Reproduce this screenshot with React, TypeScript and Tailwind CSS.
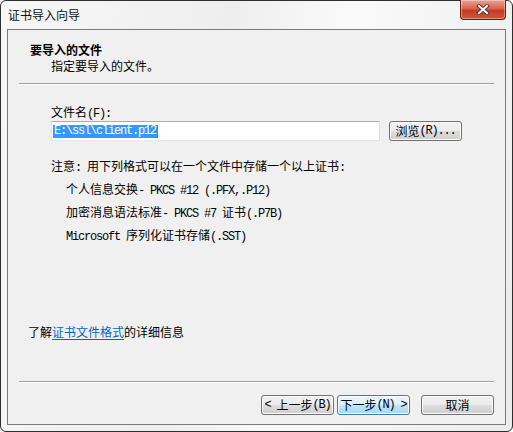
import type { ReactNode } from 'react'

// ASCII runs in the dialog are half-width (6px) like SimSun
function A({ children }: { children: ReactNode }) {
    return <span className="font-['Liberation_Mono'] text-[12px] leading-none tracking-[-1.2px] whitespace-pre">{children}</span>
}

function WinButton({ children, focused = false }: { children: ReactNode; focused?: boolean }) {
    return (
        <div
            className={`w-[73px] h-[20px] rounded-[3px] border flex items-center justify-center leading-[18px] ${
                focused
                    ? 'border-[#3c7fb1] bg-[linear-gradient(#eaf6fd,#d9f0fc_50%,#bee6fd_51%,#a7d9f5)] shadow-[inset_0_0_0_1px_#fbfdfe]'
                    : 'border-[#707070] bg-[linear-gradient(#f2f2f2,#ebebeb_50%,#dddddd_51%,#cfcfcf)] shadow-[inset_0_0_0_1px_#fcfcfc]'
            }`}
        >
            {children}
        </div>
    )
}

function CloseButton() {
    return (
        <div className="w-[46px] h-[20px] -mt-[1px] rounded-b-[4px] border border-t-0 border-[#6d1f14] bg-[linear-gradient(#e9a596,#d9644d_45%,#c73a22_55%,#d0573f)] shadow-[inset_0_0_0_1px_rgba(255,255,255,0.35)] flex items-center justify-center">
            <svg width="14" height="11" viewBox="0 0 14 11">
                <path d="M3 2 L11 9 M11 2 L3 9" stroke="#5a3a34" strokeWidth="4" strokeLinecap="square" />
                <path d="M3 2 L11 9 M11 2 L3 9" stroke="#ffffff" strokeWidth="2" strokeLinecap="square" />
            </svg>
        </div>
    )
}

export default function App() {
    return (
        <div className="w-[513px] h-[432px] bg-white font-['Noto_Sans_CJK_SC',sans-serif] text-[12px] text-black">
            <div className="w-full h-full border border-[#2e2e2e] rounded-[6px] bg-[linear-gradient(100deg,#f7f7f7,#eeeeee_40%,#fafafa_60%,#ececec)] flex flex-col px-[6px] pb-[6px]">
                {/* Barra de título */}
                <div className="h-[28px] flex items-start justify-between">
                    <span className="ml-[1px] mt-[6px] leading-[16px] text-[#111]">证书导入向导</span>
                    <CloseButton />
                </div>

                {/* Área cliente */}
                <div className="flex-1 border border-[#7a7a7a] bg-[#f0f0f0] flex flex-col">
                    <div className="pt-[12px] leading-[16px]">
                        <p className="ml-[22px] font-bold">要导入的文件</p>
                        <p className="ml-[43px]">指定要导入的文件。</p>
                    </div>
                    <div className="mx-[11px] mt-[9px] border-t border-[#a0a0a0] border-b border-b-white" />

                    <div className="ml-[43px] mt-[19px] leading-[16px]">
                        文件名<A>(F):</A>
                    </div>
                    <div className="ml-[43px] mt-[1px] flex items-center gap-[9px]">
                        <div className="w-[329px] h-[20px] border border-[#abadb3] border-l-[#e2e3ea] border-r-[#dbdfe6] border-b-[#e3e9ef] bg-white flex items-center px-[1px]">
                            <span className="bg-[#3399ff] text-white leading-[13px] px-[1px] font-['Liberation_Mono'] text-[12px] tracking-[-1.2px]">
                                E:\ssl\client.p12
                            </span>
                            <span className="w-[1px] h-[13px] bg-[#cc6600]" />
                        </div>
                        <WinButton>
                            浏览<A>(R)...</A>
                        </WinButton>
                    </div>

                    <div className="ml-[43px] mt-[13px] leading-[23px]">
                        <p>
                            注意<A>: </A>用下列格式可以在一个文件中存储一个以上证书<A>:</A>
                        </p>
                        <div className="ml-[15px]">
                            <p>
                                个人信息交换<A>- PKCS #12 (.PFX,.P12)</A>
                            </p>
                            <p>
                                加密消息语法标准<A>- PKCS #7 </A>证书<A>(.P7B)</A>
                            </p>
                            <p>
                                <A>Microsoft </A>序列化证书存储<A>(.SST)</A>
                            </p>
                        </div>
                    </div>

                    <div className="flex-1" />

                    <p className="ml-[20px] leading-[16px]">
                        了解<span className="text-[#0066cc] underline underline-offset-2">证书文件格式</span>的详细信息
                    </p>
                    <div className="mx-[11px] mt-[41px] border-t border-[#a0a0a0] border-b border-b-white" />

                    <div className="mt-[12px] mb-[9px] mr-[11px] flex justify-end">
                        <div className="flex gap-[3px]">
                            <WinButton>
                                <A>{'< '}</A>上一步<A>(B)</A>
                            </WinButton>
                            <WinButton focused>
                                下一步<A>{'(N) >'}</A>
                            </WinButton>
                        </div>
                        <div className="ml-[11px]">
                            <WinButton>取消</WinButton>
                        </div>
                    </div>
                </div>
            </div>
        </div>
    )
}
